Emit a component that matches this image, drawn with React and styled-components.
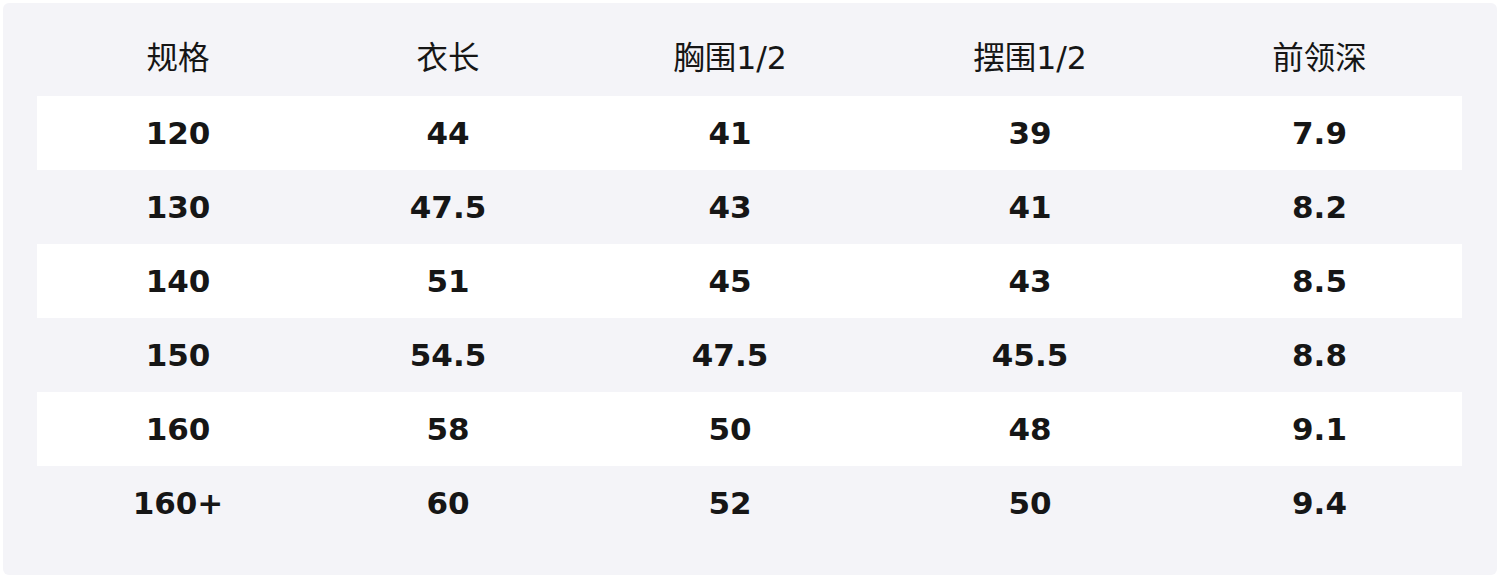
import styled, { createGlobalStyle } from "styled-components";

const GlobalStyle = createGlobalStyle`
  html, body {
    margin: 0;
    padding: 0;
    background: #ffffff;
  }
`;

const Panel = styled.section`
  margin: 3px;
  height: 572px;
  box-sizing: border-box;
  padding: 14px 35px 0 34px;
  background: #f4f4f8;
  border-radius: 6px;
`;

const Table = styled.table`
  width: 1425px;
  border-collapse: collapse;
  table-layout: fixed;
  font-family: "DejaVu Sans", "Noto Sans CJK SC", sans-serif;
  color: #161616;
`;

const HeadCell = styled.th`
  height: 75px;
  padding: 0 0 4px;
  font-size: 31.5px;
  font-weight: 400;
  text-align: center;
  vertical-align: middle;
`;

const Row = styled.tr`
  background: ${(p) => (p.$light ? "#ffffff" : "transparent")};
`;

const Cell = styled.td`
  height: 74px;
  padding: 0;
  font-size: 31px;
  font-weight: 700;
  text-align: center;
  vertical-align: middle;
`;

const columns = [
  { label: "规格", width: 282 },
  { label: "衣长", width: 258 },
  { label: "胸围1/2", width: 306 },
  { label: "摆围1/2", width: 294 },
  { label: "前领深", width: 285 },
];

const rows = [
  ["120", "44", "41", "39", "7.9"],
  ["130", "47.5", "43", "41", "8.2"],
  ["140", "51", "45", "43", "8.5"],
  ["150", "54.5", "47.5", "45.5", "8.8"],
  ["160", "58", "50", "48", "9.1"],
  ["160+", "60", "52", "50", "9.4"],
];

function App() {
  return (
    <>
      <GlobalStyle />
      <Panel>
        <Table>
          <colgroup>
            {columns.map((c) => (
              <col key={c.label} style={{ width: c.width }} />
            ))}
          </colgroup>
          <thead>
            <tr>
              {columns.map((c) => (
                <HeadCell key={c.label}>{c.label}</HeadCell>
              ))}
            </tr>
          </thead>
          <tbody>
            {rows.map((r, i) => (
              <Row key={r[0]} $light={i % 2 === 0}>
                {r.map((v, j) => (
                  <Cell key={j}>{v}</Cell>
                ))}
              </Row>
            ))}
          </tbody>
        </Table>
      </Panel>
    </>
  );
}

export default App;
